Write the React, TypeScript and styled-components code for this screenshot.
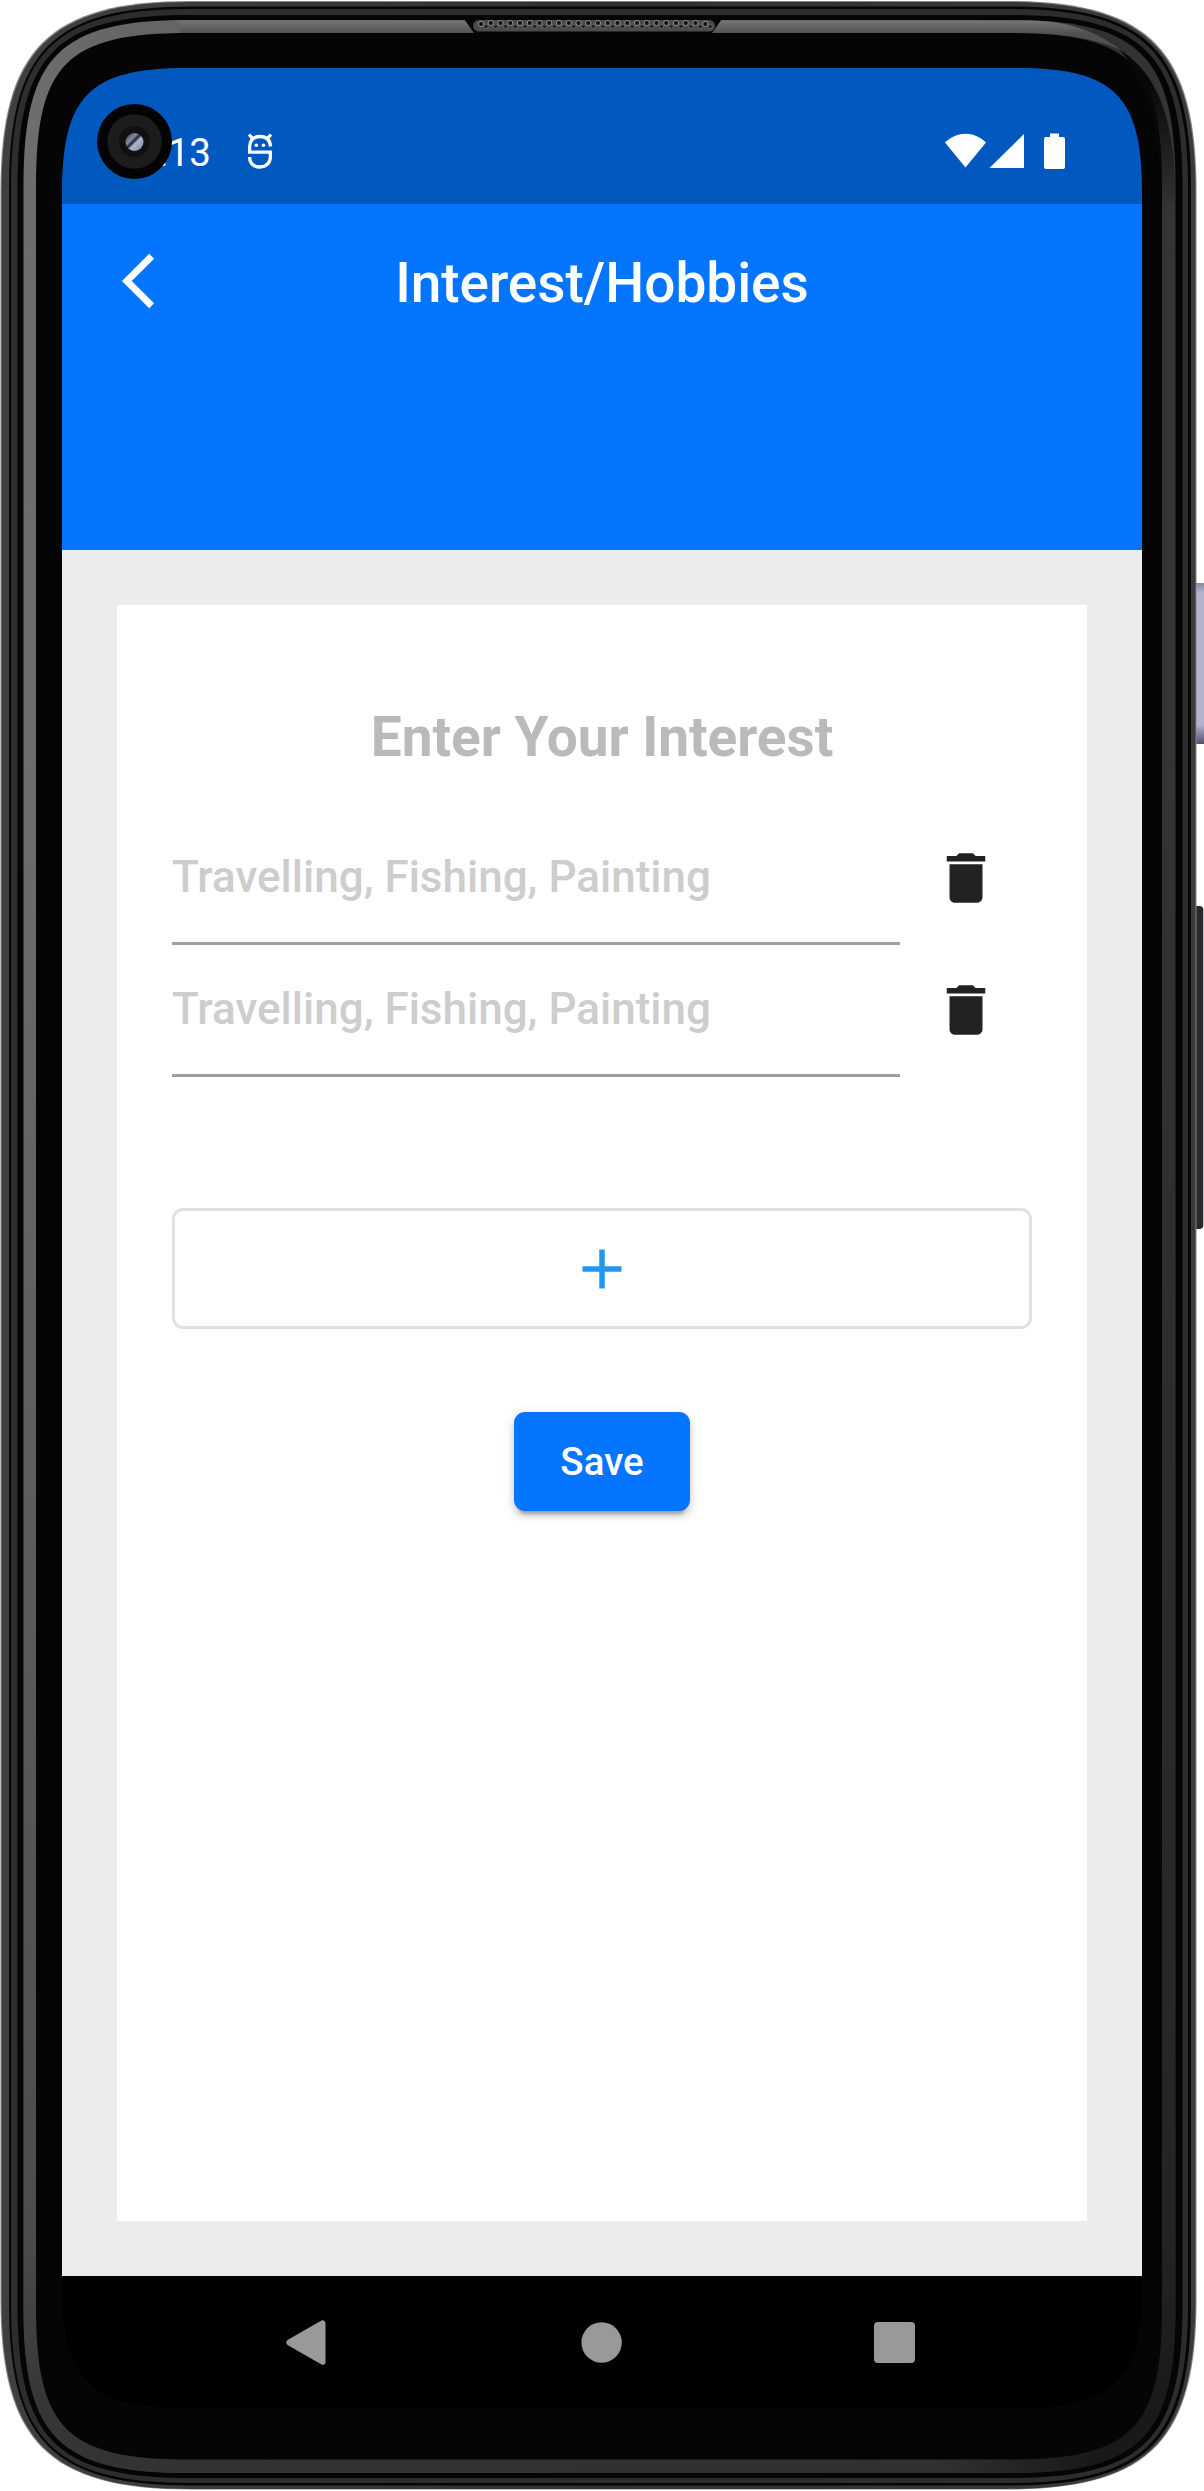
import React from "react";
import styled, { createGlobalStyle } from "styled-components";

const GlobalStyle = createGlobalStyle`
  * { box-sizing: border-box; }
  body { margin: 0; background: #fff; font-family: Roboto, "Liberation Sans", sans-serif; }
  button { font-family: inherit; }
`;

const Phone = styled.main`
  position: relative;
  width: 1204px;
  height: 2491px;
  padding: 68px 62px 83px;
  overflow: hidden;
`;

const Casing = styled.svg`
  position: absolute;
  inset: 0;
`;

const Screen = styled.div`
  position: relative;
  display: flex;
  flex-direction: column;
  width: 1080px;
  height: 2340px;
  background: #000;
  clip-path: path("M0 124C0 28 28 0 124 0H956C1052 0 1080 28 1080 124V2216C1080 2312 1052 2340 956 2340H124C28 2340 0 2312 0 2216Z");
`;

const StatusBar = styled.header`
  display: flex;
  align-items: flex-start;
  height: 136px;
  padding: 65px 77px 0 93px;
  background: #0158bf;
  color: #fff;
`;

const Clock = styled.span`
  width: 56px;
  margin-top: -3px;
  font-size: 38.5px;
  line-height: 46px;
  text-align: right;
  white-space: nowrap;
`;

const DebugIcon = styled.svg`
  margin: 0 auto 0 35px;
`;

const Indicators = styled.div`
  display: flex;
`;

const AppBar = styled.div`
  display: grid;
  grid-template-columns: 154px 1fr 154px;
  align-items: center;
  height: 154px;
  background: #0475ff;
`;

const Title = styled.h1`
  margin: 0;
  padding-top: 4px;
  color: #fff;
  font-size: 55px;
  font-weight: 500;
  line-height: 64px;
  text-align: center;
  letter-spacing: -0.04px;
  white-space: nowrap;
`;

const BackButton = styled.button`
  display: flex;
  padding: 0 0 0 60.3px;
  border: 0;
  background: none;
`;

const Banner = styled.div`
  height: 191.6px;
  background: #0475ff;
`;

const Body = styled.section`
  flex: 1;
  padding: 55.4px 55px 55px;
  background: #ececec;
`;

const Card = styled.form`
  display: flex;
  flex-direction: column;
  height: 100%;
  padding: 100px 55px 0;
  background: #fff;
`;

const Heading = styled.h2`
  margin: 0 0 44px;
  color: #bababa;
  font-size: 55px;
  font-weight: 700;
  line-height: 64px;
  text-align: center;
  letter-spacing: -0.04px;
`;

const InterestRow = styled.div`
  display: flex;
  gap: 33px;
  height: 132px;
`;

const Field = styled.div`
  width: 728px;
  padding-top: 38px;
  border-bottom: 3px solid #9f9f9f;
  color: #cdcdcd;
  font-size: 44px;
  font-weight: 500;
  line-height: 52px;
`;

const DeleteButton = styled.button`
  align-self: flex-start;
  display: flex;
  margin-top: 32.4px;
  padding: 0;
  border: 0;
  background: none;
`;

const AddButton = styled.button`
  display: flex;
  align-items: center;
  justify-content: center;
  height: 121px;
  margin-top: 131px;
  padding: 1px 0 0;
  border: 3px solid #e0e0e0;
  border-radius: 11px;
  background: #fff;
`;

const SaveButton = styled.button`
  align-self: center;
  width: 176px;
  height: 99px;
  margin-top: 83px;
  padding: 0;
  border: 0;
  border-radius: 11px;
  background: #0475ff;
  box-shadow: 0 8px 3px -5px rgba(0, 0, 0, 0.2), 0 5px 6px rgba(0, 0, 0, 0.14), 0 3px 13px rgba(0, 0, 0, 0.12);
  color: #fff;
  font-size: 38.5px;
  font-weight: 500;
`;

const NavBar = styled.nav`
  display: flex;
  justify-content: space-between;
  height: 132px;
  padding: 43px 227px 0 223px;
  background: #000;
`;

const Camera = styled.svg`
  position: absolute;
  left: 97px;
  top: 104px;
`;

/* Outline of one shell of the casing, with softened corners. */
const shell = (l: number, t: number, r: number, b: number, e: number, c: number) =>
  `M${l} ${t + e}C${l} ${t + c} ${l + c} ${t} ${l + e} ${t}H${r - e}C${r - c} ${t} ${r} ${t + c} ${r} ${t + e}` +
  `V${b - e}C${r} ${b - c} ${r - c} ${b} ${r - e} ${b}H${l + e}C${l + c} ${b} ${l} ${b - c} ${l} ${b - e}Z`;

const holes = Array.from({ length: 24 }, (_, i) => 481 + i * 9.75);

const PhoneCasing = () => (
  <Casing width="1204" height="2491" viewBox="0 0 1204 2491" aria-hidden="true">
    <defs>
      <linearGradient id="rim" x1="0" x2="1">
        <stop offset="0" stopColor="#3e4040" />
        <stop offset="0.5" stopColor="#303030" />
        <stop offset="1" stopColor="#3a3a3a" />
      </linearGradient>
      <linearGradient id="bevel" x1="0" x2="1">
        <stop offset="0" stopColor="#6e6e6e" />
        <stop offset="0.08" stopColor="#666666" />
        <stop offset="0.8" stopColor="#606060" />
        <stop offset="0.93" stopColor="#303030" />
        <stop offset="1" stopColor="#343434" />
      </linearGradient>
      <linearGradient id="shade" x1="0" x2="0" y1="0" y2="1">
        <stop offset="0.3" stopColor="#000" stopOpacity="0" />
        <stop offset="0.9" stopColor="#000" stopOpacity="0.3" />
        <stop offset="0.97" stopColor="#000" stopOpacity="0.5" />
      </linearGradient>
      <linearGradient id="topShine" x1="0" x2="0" y1="20" y2="34" gradientUnits="userSpaceOnUse">
        <stop offset="0" stopColor="#777" />
        <stop offset="1" stopColor="#505050" />
      </linearGradient>
      <linearGradient id="cornerFade" x1="0" x2="0" y1="50" y2="210" gradientUnits="userSpaceOnUse">
        <stop offset="0.2" stopColor="#080808" />
        <stop offset="1" stopColor="#080808" stopOpacity="0" />
      </linearGradient>
      <linearGradient id="power" x1="0" x2="0" y1="0" y2="1">
        <stop offset="0" stopColor="#8587a0" />
        <stop offset="0.06" stopColor="#b1b3cd" />
        <stop offset="0.88" stopColor="#b1b3cd" />
        <stop offset="1" stopColor="#50506e" />
      </linearGradient>
    </defs>
    <rect x="1193" y="583" width="14" height="161" rx="2" fill="url(#power)" />
    <rect x="1192" y="906" width="11.300" height="323" rx="4" fill="#29292b" />
    <path d={shell(0.5, 1, 1196.5, 2489.5, 190, 48)} fill="#858585" />
    <path d={shell(1.5, 2, 1195.5, 2489, 190, 48)} fill="url(#rim)" />
    <path d={shell(9, 6.5, 1191, 2485.5, 182, 44)} fill="#050505" />
    <path d={shell(11, 9, 1188, 2483, 179, 43)} fill="#2d2d2d" />
    <path d={shell(17.5, 15, 1182.5, 2478, 172, 39)} fill="#050505" />
    <path d={shell(23.5, 20, 1175.5, 2473, 165, 36)} fill="url(#bevel)" />
    <path d={shell(23.5, 20, 1175.5, 2473, 165, 36)} fill="url(#shade)" />
    <path d={shell(36, 33, 1162, 2459.5, 152, 31)} fill="#050505" />
    <path d="M180 20.5H1030C1072 21 1100 34 1121 50C1096 39 1065 33 1020 33H180Z" fill="url(#topShine)" />
    <path d="M1119 49C1157 74 1176 115 1176 210H1161C1161 120 1146 80 1119 49Z" fill="url(#cornerFade)" />
    <path d="M464 19H722L712 33H474Z" fill="#070707" />
    <rect x="473" y="20" width="242" height="11.5" rx="5.7" fill="#4b4b4b" />
    {holes.map((x, i) => (
      <g key={x}>
        <circle cx={x} cy={i === 0 || i === 23 ? 24 : 23} r="2.6" fill="#111" stroke="#aaa" strokeWidth="0.8" />
        <circle cx={x + 5} cy="26.5" r="2.2" fill="#252525" stroke="#808080" strokeWidth="0.6" />
      </g>
    ))}
  </Casing>
);

const PLACEHOLDER = "Travelling, Fishing, Painting";

export default function App() {
  return (
    <>
      <GlobalStyle />
      <Phone>
        <PhoneCasing />
        <Screen>
          <StatusBar>
            <Clock>:13</Clock>
            <DebugIcon width="28" height="37" viewBox="0 0 28 37" fill="none" stroke="#fff" strokeWidth="3.300">
              <path d="M3.600 19.500V14C4 7 8 3.500 14 3.500S24 7 24.500 13.500M2 19.200H24.400V23.500C24.400 30 20 34 14 34C8 34 3.600 30.500 3.600 24M3 1.500L7 6M25 1.500L21 6" />
              <circle cx="10.300" cy="12.200" r="1.800" fill="#fff" stroke="none" />
              <circle cx="17.500" cy="12.200" r="1.800" fill="#fff" stroke="none" />
            </DebugIcon>
            <Indicators>
              <svg width="122" height="37" viewBox="0 0 122 37" fill="#fff">
                <path d="M2 9.5C14-2.2 31-2.2 43 9.5L22.5 34.5Z" />
                <path d="M46.5 35L81 1V35Z" />
                <path d="M107 0.5H116V4H120Q122 4 122 6V34Q122 36 120 36H103Q101 36 101 34V6Q101 4 103 4H107Z" />
              </svg>
            </Indicators>
          </StatusBar>
          <AppBar>
            <BackButton type="button" aria-label="Back">
              <svg width="66" height="66" viewBox="0 0 24 24" fill="#fff">
                <path d="M11.67 3.87 9.9 2.1 0 12l9.9 9.9 1.77-1.77L3.54 12z" />
              </svg>
            </BackButton>
            <Title>Interest/Hobbies</Title>
          </AppBar>
          <Banner />
          <Body>
            <Card>
              <Heading>Enter Your Interest</Heading>
              {[0, 1].map((row) => (
                <InterestRow key={row}>
                  <Field>{PLACEHOLDER}</Field>
                  <DeleteButton type="button" aria-label="Delete">
                    <svg width="66" height="66" viewBox="0 0 24 24" fill="#222">
                      <path d="M6 19c0 1.1.9 2 2 2h8c1.1 0 2-.9 2-2V7H6v12zM19 4h-3.5l-1-1h-5l-1 1H5v2h14V4z" />
                    </svg>
                  </DeleteButton>
                </InterestRow>
              ))}
              <AddButton type="button" aria-label="Add">
                <svg width="66" height="66" viewBox="0 0 24 24" fill="#2196f3">
                  <path d="M19.1 13h-6.1v6.1h-2V13H4.9v-2H11V4.9h2V11h6.1z" />
                </svg>
              </AddButton>
              <SaveButton type="button">Save</SaveButton>
            </Card>
          </Body>
          <NavBar>
            <svg width="42" height="48" viewBox="0 0 42 48" fill="#999">
              <path d="M2.5 21Q0 23.5 2.5 26L36.5 45.5Q40.5 46.5 40.5 43V4Q40 0.5 36.5 1.5Z" />
            </svg>
            <svg width="44" height="48" viewBox="0 0 44 48" fill="#999">
              <circle cx="23.600" cy="23.500" r="20.200" />
            </svg>
            <svg width="42" height="48" viewBox="0 0 42 48" fill="#999">
              <rect x="1" y="3" width="41" height="41" rx="4" />
            </svg>
          </NavBar>
        </Screen>
        <Camera width="75" height="75" viewBox="0 0 75 75" aria-hidden="true">
          <defs>
            <linearGradient id="lens" x1="0" y1="0" x2="1" y2="1">
              <stop offset="0.1" stopColor="#4b4e66" />
              <stop offset="0.34" stopColor="#858ba3" />
              <stop offset="0.46" stopColor="#20222c" />
              <stop offset="0.56" stopColor="#a8b5cb" />
              <stop offset="0.9" stopColor="#8795ad" />
            </linearGradient>
          </defs>
          <circle cx="37.5" cy="37.5" r="37.5" fill="#030303" />
          <circle cx="37.5" cy="37.5" r="27.3" fill="#1c1c1c" />
          <circle cx="37.5" cy="37.5" r="15.5" fill="#101010" />
          <circle cx="37.5" cy="38" r="9" fill="url(#lens)" />
        </Camera>
      </Phone>
    </>
  );
}
